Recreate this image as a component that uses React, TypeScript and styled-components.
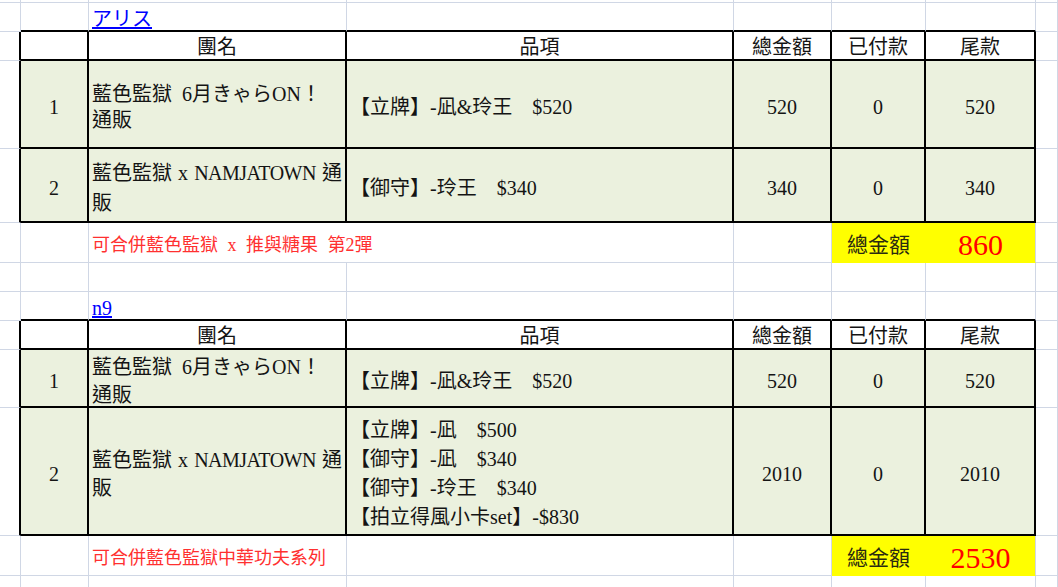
import styled, { createGlobalStyle } from "styled-components";

const GRID = "#d0d7e5";
const BLACK = "#000";
const GREEN = "#ebf1de";
const YELLOW = "#ffff00";

const GlobalStyle = createGlobalStyle`
  html, body { margin: 0; padding: 0; background: #fff; }
  body {
    font-family: "Liberation Serif", "Noto Sans CJK TC", serif;
    color: #141414;
    overflow: hidden;
  }
`;

const Sheet = styled.div`
  width: 1058px;
  height: 587px;
  overflow: hidden;
`;

const Row = styled.div<{ $h: number }>`
  display: grid;
  grid-template-columns: 21px 68px 258px 387px 98px 94px 110px 1fr;
  grid-template-rows: minmax(0, 1fr);
  height: ${(p) => p.$h}px;
`;

type CellProps = {
  $r?: string;
  $b?: string;
  $fill?: string;
  $left?: boolean;
  $v?: "center" | "end";
  $span?: number;
  $pt?: number;
};

const Cell = styled.div<CellProps>`
  box-sizing: border-box;
  min-width: 0;
  min-height: 0;
  grid-column: span ${(p) => p.$span ?? 1};
  display: flex;
  align-items: ${(p) => (p.$v === "end" ? "flex-end" : "center")};
  justify-content: ${(p) => (p.$left ? "flex-start" : "center")};
  padding: ${(p) => p.$pt ?? 0}px 3px 0 3px;
  background: ${(p) => p.$fill ?? "transparent"};
  border-right: ${(p) => (p.$r === BLACK ? 2 : 1)}px solid ${(p) => p.$r ?? GRID};
  border-bottom: ${(p) => (p.$b === BLACK ? 2 : 1)}px solid ${(p) => p.$b ?? GRID};
  font-size: 20px;
  line-height: 24px;
  white-space: nowrap;
`;

const Link = styled.a`
  color: #0000ff;
  text-decoration: underline;
  font-size: 20px;
  line-height: 22px;
`;

const Stack = styled.div<{ $lh: number }>`
  width: 100%;
  line-height: ${(p) => p.$lh}px;
  word-spacing: 5px;
`;

const Spread = styled.div`
  display: flex;
  justify-content: space-between;
`;

const Latin = styled.span`
  letter-spacing: -0.5px;
`;

const Note = styled.span`
  color: #ff3030;
  font-size: 18px;
  word-spacing: 5px;
`;

const TotalLabel = styled.span`
  color: #2a2a10;
  font-size: 21px;
`;

const TotalValue = styled.span`
  color: #ff0000;
  font-size: 30px;
  line-height: 34px;
`;

type Line = {
  no: number;
  h: number;
  group: "short" | "long";
  glh: number;
  items: string[];
  ilh: number;
  total: number;
  paid: number;
};

type Order = {
  name: string;
  lines: Line[];
  note: string;
  noteWide: boolean;
  total: number;
};

const orders: Order[] = [
  {
    name: "アリス",
    lines: [
      { no: 1, h: 88, group: "short", glh: 26, items: ["【立牌】-凪&玲王\u3000$520"], ilh: 26, total: 520, paid: 0 },
      { no: 2, h: 74, group: "long", glh: 30, items: ["【御守】-玲王\u3000$340"], ilh: 26, total: 340, paid: 0 },
    ],
    note: "可合併藍色監獄 x 推與糖果 第2彈",
    noteWide: true,
    total: 860,
  },
  {
    name: "n9",
    lines: [
      { no: 1, h: 58, group: "short", glh: 28, items: ["【立牌】-凪&玲王\u3000$520"], ilh: 26, total: 520, paid: 0 },
      {
        no: 2,
        h: 128,
        group: "long",
        glh: 28,
        items: ["【立牌】-凪\u3000$500", "【御守】-凪\u3000$340", "【御守】-玲王\u3000$340", "【拍立得風小卡set】-$830"],
        ilh: 29,
        total: 2010,
        paid: 0,
      },
    ],
    note: "可合併藍色監獄中華功夫系列",
    noteWide: false,
    total: 2530,
  },
];

const T = { $r: BLACK, $b: BLACK };

function BlankRow({ h }: { h: number }) {
  return (
    <Row $h={h}>
      {Array.from({ length: 8 }, (_, i) => (
        <Cell key={i} />
      ))}
    </Row>
  );
}

function GroupName({ kind, lh }: { kind: "short" | "long"; lh: number }) {
  if (kind === "short") {
    return (
      <Stack $lh={lh}>
        <div>藍色監獄 6月きゃらON！</div>
        <div>通販</div>
      </Stack>
    );
  }
  return (
    <Stack $lh={lh}>
      <Spread>
        <span>藍色監獄</span>
        <span>x</span>
        <Latin>NAMJATOWN</Latin>
        <span>通</span>
      </Spread>
      <div>販</div>
    </Stack>
  );
}

function OrderBlock({ order }: { order: Order }) {
  return (
    <>
      <Row $h={29}>
        <Cell />
        <Cell $b={BLACK} />
        <Cell $b={BLACK} $left $v="end">
          <Link href="#">{order.name}</Link>
        </Cell>
        <Cell $b={BLACK} />
        <Cell $b={BLACK} />
        <Cell $b={BLACK} />
        <Cell $b={BLACK} />
        <Cell />
      </Row>
      <Row $h={29}>
        <Cell $r={BLACK} />
        <Cell {...T} />
        <Cell {...T} $pt={2}>團名</Cell>
        <Cell {...T} $pt={2}>品項</Cell>
        <Cell {...T} $pt={2}>總金額</Cell>
        <Cell {...T} $pt={2}>已付款</Cell>
        <Cell {...T} $pt={2}>尾款</Cell>
        <Cell />
      </Row>
      {order.lines.map((l) => (
        <Row $h={l.h} key={l.no}>
          <Cell $r={BLACK} />
          <Cell {...T} $fill={GREEN} $pt={6}>{l.no}</Cell>
          <Cell {...T} $fill={GREEN} $left $pt={6}>
            <GroupName kind={l.group} lh={l.glh} />
          </Cell>
          <Cell {...T} $fill={GREEN} $left $pt={6}>
            <Stack $lh={l.ilh}>
              {l.items.map((it) => (
                <div key={it}>{it}</div>
              ))}
            </Stack>
          </Cell>
          <Cell {...T} $fill={GREEN} $pt={6}>{l.total}</Cell>
          <Cell {...T} $fill={GREEN} $pt={6}>{l.paid}</Cell>
          <Cell {...T} $fill={GREEN} $pt={6}>{l.total - l.paid}</Cell>
          <Cell />
        </Row>
      ))}
      <Row $h={40}>
        <Cell />
        <Cell />
        <Cell $span={order.noteWide ? 2 : 1} $left $pt={4}>
          <Note>{order.note}</Note>
        </Cell>
        {!order.noteWide && <Cell />}
        <Cell />
        <Cell $fill={YELLOW} $r={YELLOW} $b={YELLOW} $pt={4}>
          <TotalLabel>總金額</TotalLabel>
        </Cell>
        <Cell $fill={YELLOW} $b={YELLOW} $pt={4}>
          <TotalValue>{order.total}</TotalValue>
        </Cell>
        <Cell />
      </Row>
    </>
  );
}

export default function App() {
  return (
    <>
      <GlobalStyle />
      <Sheet>
        <BlankRow h={3} />
        <OrderBlock order={orders[0]} />
        <BlankRow h={29} />
        <OrderBlock order={orders[1]} />
        <BlankRow h={40} />
      </Sheet>
    </>
  );
}
